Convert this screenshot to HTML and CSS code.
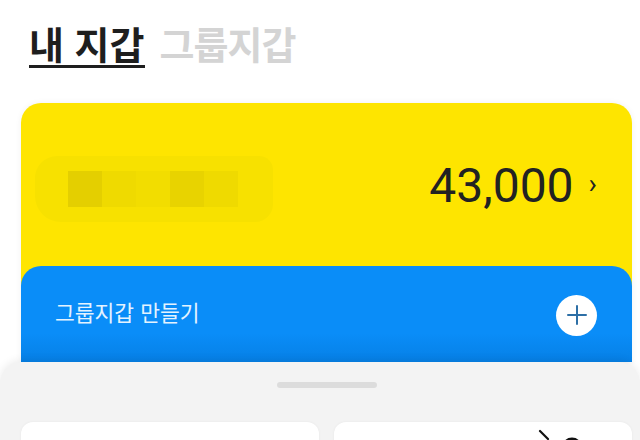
FILE: index.html
```html
<!DOCTYPE html>
<html lang="ko">
<head>
    <meta charset="UTF-8">
    <meta name="viewport" content="width=device-width, initial-scale=1.0">
    <title>내 지갑</title>
    <link rel="stylesheet" href="styles.css">
</head>
<body>
    <div class="screen">
        <nav class="tabs">
            <a href="#my-wallet" class="tab active">내 지갑</a>
            <a href="#group-wallet" class="tab">그룹지갑</a>
        </nav>

        <div class="wallet-card">
            <div class="wallet-summary">
                <!-- account name is blurred out in the source -->
                <div class="masked-name">
                    <span class="tile dark"></span>
                    <span class="tile"></span>
                    <span class="tile light"></span>
                    <span class="tile mid"></span>
                    <span class="tile"></span>
                </div>
                <a href="#balance" class="balance">43,000<span class="chevron">&rsaquo;</span></a>
            </div>
            <div class="group-card">
                <span class="group-label">그룹지갑 만들기</span>
                <button class="add-btn" aria-label="그룹지갑 만들기">
                    <svg width="22" height="22" viewBox="0 0 22 22">
                        <path d="M11 2v18M2 11h18" stroke="#2d6fa6" stroke-width="2" stroke-linecap="round" fill="none"/>
                    </svg>
                </button>
            </div>
        </div>

        <div class="sheet">
            <div class="handle"></div>
            <div class="sheet-cards">
                <div class="mini-card"></div>
                <div class="mini-card">
                    <svg class="mini-icon" width="50" height="20" viewBox="0 0 50 20">
                        <path d="M2 3l8 8" stroke="#111" stroke-width="2.2" stroke-linecap="round" fill="none"/>
                        <path d="M26 18a8 7 0 0 1 16 0" stroke="#111" stroke-width="3" fill="none"/>
                    </svg>
                </div>
            </div>
        </div>
    </div>
</body>
</html>
```

FILE: styles.css
```css
/* Common styles */
body {
    margin: 0;
    padding: 0;
    background-color: #ffffff;
    font-family: "Noto Sans CJK KR", "Noto Sans", sans-serif;
    color: #1e1e1e;
}
.screen {
    width: 640px;
    height: 440px;
    overflow: hidden;
}
.tabs {
    display: flex;
    gap: 15px;
    padding: 18px 0 0 29px;
    height: 90px;
    box-sizing: border-box;
}
.tab {
    font-size: 38px;
    font-weight: bold;
    line-height: 50px;
    height: 50px;
    color: #d4d4d4;
    text-decoration: none;
    box-sizing: border-box;
}
.tab.active {
    color: #1e1e1e;
    border-bottom: 3px solid #1e1e1e;
}
.tab + .tab {
    letter-spacing: -1px;
}
.wallet-card {
    margin: 13px 8px 0 21px;
    background-color: #fee500;
    border-radius: 20px 20px 0 0;
    box-shadow: 0 0 6px rgba(0, 0, 0, 0.06);
}
.wallet-summary {
    height: 163px;
    display: flex;
    align-items: center;
    justify-content: space-between;
    padding: 0 35px 0 14px;
}
.masked-name {
    display: flex;
    align-items: center;
    width: 238px;
    height: 66px;
    margin-top: 8px;
    padding-left: 33px;
    box-sizing: border-box;
    background-color: #f7e100;
    border-radius: 22px 14px 18px 26px;
}
.tile {
    width: 34px;
    height: 36px;
    background-color: #efda00;
}
.tile.dark {
    background-color: #e4cf00;
}
.tile.mid {
    background-color: #e8d300;
}
.tile.light {
    background-color: #f2dd00;
}
.balance {
    display: flex;
    align-items: center;
    font-family: Roboto, "Liberation Sans", sans-serif;
    font-size: 48px;
    color: #222222;
    text-decoration: none;
    margin-top: 2px;
}
.chevron {
    font-size: 28px;
    margin-left: 15px;
    margin-top: -4px;
}
.group-card {
    height: 96px;
    display: flex;
    align-items: center;
    justify-content: space-between;
    padding: 0 35px 0 34px;
    background: linear-gradient(#0a8df8 70%, #0680e6);
    border-radius: 20px 20px 0 0;
}
.group-label {
    font-size: 21.5px;
    color: #e4f3ff;
    margin-top: -6px;
}
.add-btn {
    width: 41px;
    height: 41px;
    border: none;
    border-radius: 50%;
    background-color: #ffffff;
    display: flex;
    align-items: center;
    justify-content: center;
    padding: 0;
    margin-top: 2px;
}
.sheet {
    background-color: #f3f3f3;
    border-radius: 22px 22px 0 0;
    padding: 20px 8px 0 21px;
    height: 100px;
    box-shadow: 0 -2px 8px rgba(0, 0, 0, 0.08);
    position: relative;
}
.handle {
    width: 100px;
    height: 6px;
    border-radius: 3px;
    background-color: #dcdcdc;
    margin: 0 auto;
}
.sheet-cards {
    display: grid;
    grid-template-columns: 1fr 1fr;
    gap: 15px;
    margin-top: 34px;
}
.mini-card {
    height: 80px;
    background-color: #ffffff;
    border-radius: 12px;
    box-shadow: 0 0 3px rgba(0, 0, 0, 0.05);
    position: relative;
}
.mini-icon {
    position: absolute;
    left: 204px;
    top: 6px;
}
```
